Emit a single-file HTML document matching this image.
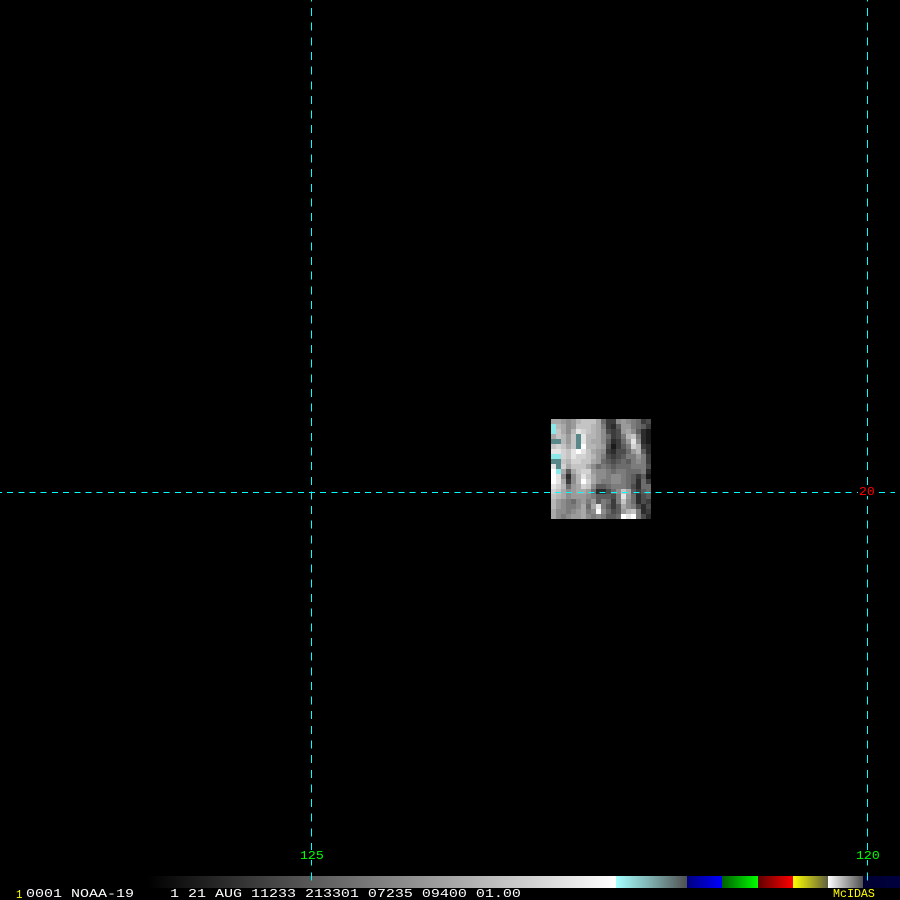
<!DOCTYPE html>
<html><head><meta charset="utf-8"><title>McIDAS</title>
<style>
html,body{margin:0;padding:0;background:#000;width:900px;height:900px;overflow:hidden}
#wrap{position:relative;width:900px;height:900px;background:#000}
ul{position:absolute;left:551px;top:419px;width:100px;height:100px;margin:0;padding:0;list-style:none;display:grid;grid-template-columns:repeat(20,5px);grid-auto-rows:5px}
li{display:block;width:5px;height:5px}
.c1{background:#1a1a1a}.c2{background:#2c2c2c}.c3{background:#3c3c3c}.c4{background:#4c4c4c}.c5{background:#5c5c5c}.c6{background:#6c6c6c}.c7{background:#7c7c7c}.c8{background:#8c8c8c}.c9{background:#9a9a9a}.ca{background:#a8a8a8}.cb{background:#b6b6b6}.cc{background:#c4c4c4}.cd{background:#d2d2d2}.ce{background:#e4e4e4}.cf{background:#fff}.C{background:#8ce8e8}.T{background:#5a8888}
#bar{position:absolute;left:147px;top:876px;width:753px;height:12px;background:linear-gradient(to right,#000 0,#fff 469px,#a5ffff 469px,#80b0b0 503px,#505050 540px,#000080 540px,#0000ff 575px,#006000 575px,#00ff00 611px,#600000 611px,#ff0000 646px,#ffff00 646px,#606040 681px,#fff 681px,#505050 716px,#000030 716px,#000040 753px)}
svg{position:absolute;left:0;top:0}
text{font-family:"Liberation Mono",monospace;font-size:12px}
</style></head><body><div id="wrap">
<ul>
<li class=ca><li class=ca><li class=c9><li class=c8><li class=c9><li class=cb><li class=cc><li class=cc><li class=cc><li class=ca><li class=c6><li class=c3><li class=c3><li class=c8><li class=c9><li class=c8><li class=c7><li class=c6><li class=c3><li class=c4>
<li class=C><li class=cb><li class=ca><li class=c8><li class=c9><li class=cc><li class=cc><li class=cc><li class=cb><li class=ca><li class=c7><li class=c3><li class=c2><li class=c5><li class=c9><li class=c9><li class=c7><li class=c6><li class=c5><li class=c3>
<li class=C><li class=cc><li class=ca><li class=c8><li class=cb><li class=ce><li class=cd><li class=cc><li class=cb><li class=ca><li class=c8><li class=c4><li class=c3><li class=c4><li class=c9><li class=ca><li class=c8><li class=c5><li class=c2><li class=c1>
<li class=ca><li class=cc><li class=cb><li class=c9><li class=cc><li class=T><li class=ce><li class=cb><li class=cb><li class=ca><li class=c8><li class=c6><li class=c3><li class=c4><li class=c7><li class=cb><li class=cc><li class=c7><li class=c2><li class=c1>
<li class=T><li class=T><li class=cb><li class=c9><li class=cc><li class=T><li class=ce><li class=cb><li class=ca><li class=ca><li class=c8><li class=c5><li class=c2><li class=c3><li class=c6><li class=c9><li class=ce><li class=c8><li class=c2><li class=c1>
<li class=cc><li class=cd><li class=cc><li class=ca><li class=cc><li class=T><li class=cf><li class=cb><li class=cb><li class=ca><li class=c9><li class=c4><li class=c1><li class=c3><li class=c5><li class=c7><li class=cd><li class=cb><li class=c3><li class=c2>
<li class=ce><li class=ce><li class=cd><li class=cc><li class=ce><li class=cf><li class=ce><li class=cc><li class=ca><li class=c9><li class=c8><li class=c3><li class=c2><li class=c4><li class=c4><li class=c6><li class=c9><li class=cb><li class=c5><li class=c2>
<li class=C><li class=C><li class=cd><li class=cc><li class=ce><li class=cd><li class=cd><li class=cc><li class=cb><li class=c9><li class=c7><li class=c4><li class=c3><li class=c4><li class=c5><li class=c7><li class=c7><li class=c9><li class=c7><li class=c3>
<li class=T><li class=T><li class=cc><li class=cb><li class=cd><li class=cd><li class=cc><li class=cc><li class=ca><li class=c9><li class=c6><li class=c5><li class=c4><li class=c5><li class=c6><li class=c5><li class=c7><li class=c8><li class=c7><li class=c3>
<li class=ce><li class=T><li class=cd><li class=ca><li class=cc><li class=cc><li class=cc><li class=ca><li class=c8><li class=c6><li class=c7><li class=c6><li class=c5><li class=c6><li class=c6><li class=c6><li class=c7><li class=c7><li class=c7><li class=c4>
<li class=cf><li class=C><li class=ca><li class=c5><li class=ca><li class=cc><li class=cd><li class=cd><li class=c9><li class=c8><li class=c8><li class=c7><li class=c6><li class=c7><li class=c7><li class=c6><li class=c6><li class=c6><li class=c7><li class=c2>
<li class=cf><li class=ce><li class=c8><li class=c2><li class=c8><li class=cb><li class=ce><li class=cc><li class=ca><li class=c8><li class=c8><li class=c7><li class=c8><li class=c8><li class=c7><li class=c6><li class=c5><li class=c3><li class=c5><li class=c1>
<li class=cf><li class=ce><li class=ca><li class=c3><li class=c8><li class=cb><li class=cf><li class=cd><li class=ca><li class=c8><li class=c7><li class=c7><li class=c8><li class=c8><li class=c7><li class=c6><li class=c5><li class=c2><li class=c6><li class=c3>
<li class=ce><li class=cd><li class=cb><li class=c6><li class=c9><li class=ca><li class=cd><li class=cc><li class=c8><li class=c5><li class=c5><li class=c6><li class=c7><li class=c7><li class=c7><li class=c6><li class=c4><li class=c2><li class=c6><li class=c6>
<li class=cd><li class=cc><li class=ca><li class=c8><li class=c9><li class=ca><li class=ca><li class=c9><li class=c6><li class=c2><li class=c2><li class=c4><li class=c6><li class=c8><li class=cc><li class=ca><li class=c5><li class=c3><li class=c5><li class=c6>
<li class=cc><li class=cb><li class=ca><li class=c8><li class=c9><li class=c9><li class=c9><li class=c8><li class=c7><li class=c5><li class=c5><li class=c5><li class=c4><li class=c7><li class=ce><li class=c9><li class=c6><li class=c2><li class=c4><li class=c5>
<li class=cb><li class=c9><li class=c8><li class=c7><li class=c6><li class=c8><li class=c9><li class=c7><li class=c9><li class=c5><li class=c7><li class=c6><li class=c3><li class=c7><li class=cc><li class=c8><li class=c6><li class=c2><li class=c4><li class=c3>
<li class=cb><li class=c9><li class=c8><li class=c7><li class=c7><li class=c8><li class=ca><li class=c6><li class=ca><li class=ce><li class=c7><li class=c5><li class=c3><li class=c5><li class=ca><li class=c8><li class=c7><li class=c4><li class=c2><li class=c4>
<li class=ca><li class=c8><li class=c8><li class=c7><li class=c8><li class=c9><li class=ca><li class=c7><li class=c8><li class=cf><li class=c8><li class=c6><li class=c4><li class=c5><li class=c9><li class=cb><li class=cc><li class=c7><li class=c2><li class=c3>
<li class=ca><li class=c8><li class=c7><li class=c8><li class=c9><li class=c9><li class=ca><li class=c8><li class=c7><li class=c8><li class=c7><li class=c5><li class=c5><li class=c6><li class=cf><li class=ce><li class=cf><li class=c7><li class=c4><li class=c2>
</ul>
<div id="bar"></div>
<svg width="900" height="900" viewBox="0 0 900 900">
<g fill="none" stroke="#00ffff" stroke-width="1" shape-rendering="crispEdges">
<path d="M-4 492.5H895" stroke-dasharray="6 5.18"/>
<path d="M311.5 -6.65V882" stroke-dasharray="8 6.65"/>
<path d="M867.5 -6.65V882" stroke-dasharray="8 6.65"/>
</g>
<rect x="299" y="850" width="26" height="10" fill="#000"/>
<rect x="854" y="850" width="26" height="10" fill="#000"/>
<rect x="858" y="486" width="18" height="10" fill="#000"/>
<text transform="translate(300,859) scale(1.1,1)" fill="#00ff00">125</text>
<text transform="translate(856,859) scale(1.1,1)" fill="#00ff00">120</text>
<text transform="translate(859,495) scale(1.1,1)" fill="#ff0000">20</text>
<text transform="translate(16,898) scale(.9,1)" fill="#ffff00">1</text>
<text transform="translate(26,897) scale(1.25,1)" fill="#ffffff" xml:space="preserve">0001 NOAA-19    1 21 AUG 11233 213301 07235 09400 01.00</text>
<text transform="translate(833,897) scale(.97,1)" fill="#ffff00">McIDAS</text>
</svg>
</div></body></html>
